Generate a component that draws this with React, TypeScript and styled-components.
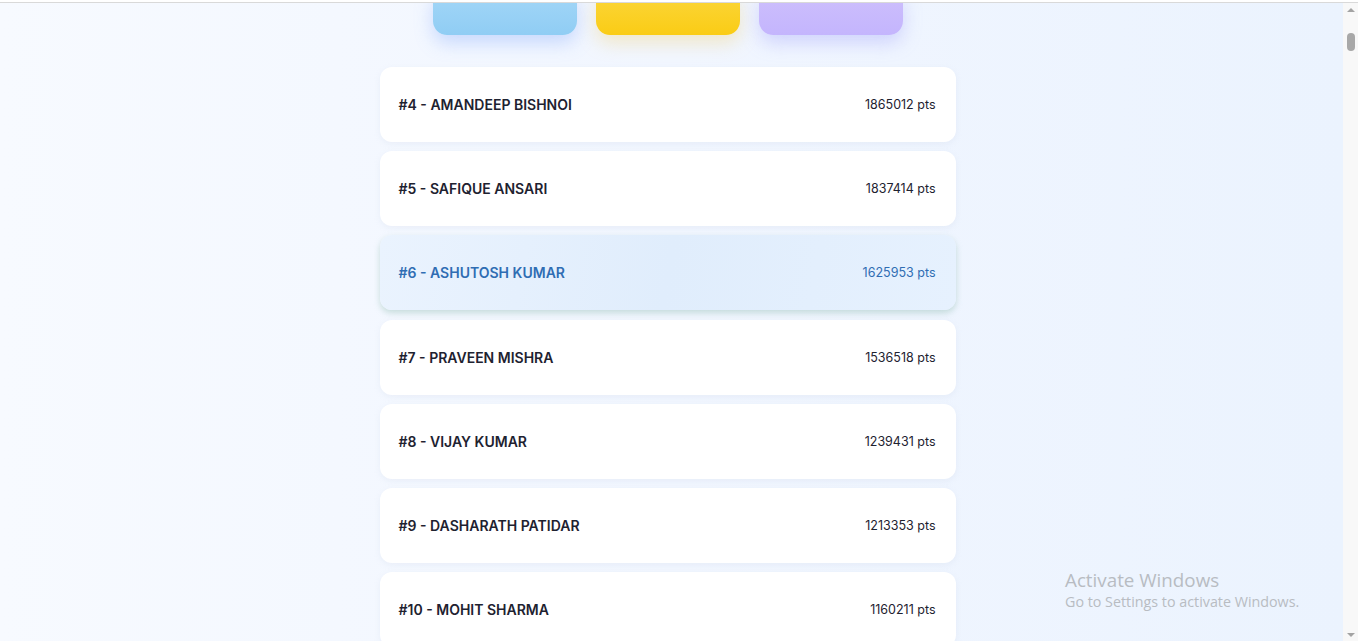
import React from "react";
import styled, { createGlobalStyle } from "styled-components";

const GlobalStyle = createGlobalStyle`
    html, body {
        margin: 0;
        padding: 0;
        height: 100%;
        overflow: hidden;
    }
    body {
        font-family: "Inter", "Noto Sans", sans-serif;
        background: #ffffff;
    }
`;

const Page = styled.div`
    display: flex;
    width: 1358px;
    height: 641px;
    padding-top: 2px;
    box-sizing: border-box;
    background: #ffffff;
`;

const Main = styled.main`
    position: relative;
    flex: 1;
    overflow: hidden;
    border-top: 1px solid #d9d9d9;
    padding-right: 8px;
    background: linear-gradient(90deg, #f7faff 0%, #f1f6ff 50%, #ebf3fe 100%);
    display: flex;
    flex-direction: column;
    align-items: center;
`;

const Podium = styled.div`
    display: flex;
    gap: 19px;
    margin-top: -10px;
`;

const Step = styled.div<{ $from: string; $to: string; $glow: string }>`
    width: 144px;
    height: 42px;
    border-radius: 0 0 14px 14px;
    background: linear-gradient(180deg, ${p => p.$from}, ${p => p.$to});
    box-shadow: 0 8px 18px ${p => p.$glow};
`;

const Board = styled.ul`
    list-style: none;
    margin: 32px 0 0;
    padding: 0;
    width: 576px;
    display: flex;
    flex-direction: column;
    gap: 9.2px;
`;

const Row = styled.li<{ $active?: boolean }>`
    height: 75px;
    box-sizing: border-box;
    padding: 0 20px 0 19px;
    border-radius: 12px;
    display: flex;
    align-items: center;
    justify-content: space-between;
    background: ${p =>
        p.$active
            ? "linear-gradient(100deg, #eaf3fe 0%, #e0edfc 50%, #e6f1fe 100%)"
            : "#ffffff"};
    box-shadow: ${p =>
        p.$active
            ? "0 3px 6px rgba(130, 180, 165, 0.4)"
            : "0 2px 6px rgba(180, 190, 210, 0.16)"};
    color: ${p => (p.$active ? "#2f6db3" : "#1e2230")};
`;

const Name = styled.span`
    font-size: 14px;
    font-weight: 600;
`;

const Points = styled.span`
    font-size: 12.5px;
    font-weight: 400;
`;

const Watermark = styled.div`
    position: absolute;
    left: 1065px;
    top: 566px;
    font-family: "Open Sans", "Noto Sans", sans-serif;
    color: #b8bcc2;
    line-height: 1.2;

    strong {
        display: block;
        font-size: 18.8px;
        font-weight: 400;
    }
    span {
        display: block;
        font-size: 14.3px;
        margin-top: 1px;
    }
`;

const ScrollTrack = styled.div`
    width: 15px;
    background: #f8f8f8;
    border-top: 1px solid #d9d9d9;
    display: flex;
    flex-direction: column;
    align-items: center;
    justify-content: space-between;
    padding: 5px 0 4px;
    box-sizing: border-box;
`;

const Arrow = styled.div<{ $down?: boolean }>`
    width: 0;
    height: 0;
    border-left: 4px solid transparent;
    border-right: 4px solid transparent;
    ${p =>
        p.$down
            ? "border-top: 4px solid #a3a3a3;"
            : "border-bottom: 4px solid #a3a3a3;"}
`;

const Thumb = styled.div`
    width: 8px;
    height: 18px;
    border-radius: 4px;
    background: #a8a8a8;
    margin-top: 21px;
`;

const Spacer = styled.div`
    flex: 1;
`;

const players = [
    { rank: 4, name: "AMANDEEP BISHNOI", pts: 1865012 },
    { rank: 5, name: "SAFIQUE ANSARI", pts: 1837414 },
    { rank: 6, name: "ASHUTOSH KUMAR", pts: 1625953 },
    { rank: 7, name: "PRAVEEN MISHRA", pts: 1536518 },
    { rank: 8, name: "VIJAY KUMAR", pts: 1239431 },
    { rank: 9, name: "DASHARATH PATIDAR", pts: 1213353 },
    { rank: 10, name: "MOHIT SHARMA", pts: 1160211 },
];

export default function App() {
    return (
        <Page>
            <GlobalStyle />
            <Main>
                <Podium>
                    <Step $from="#a2d6f7" $to="#90cdf4" $glow="rgba(120, 160, 250, 0.35)" />
                    <Step $from="#fbd63a" $to="#facc15" $glow="rgba(240, 210, 120, 0.4)" />
                    <Step $from="#cdbffc" $to="#c4b5fd" $glow="rgba(150, 150, 250, 0.35)" />
                </Podium>
                <Board>
                    {players.map(p => (
                        <Row key={p.rank} $active={p.rank === 6}>
                            <Name>
                                #{p.rank} - {p.name}
                            </Name>
                            <Points>{p.pts} pts</Points>
                        </Row>
                    ))}
                </Board>
                <Watermark>
                    <strong>Activate Windows</strong>
                    <span>Go to Settings to activate Windows.</span>
                </Watermark>
            </Main>
            <ScrollTrack>
                <Arrow />
                <Thumb />
                <Spacer />
                <Arrow $down />
            </ScrollTrack>
        </Page>
    );
}
